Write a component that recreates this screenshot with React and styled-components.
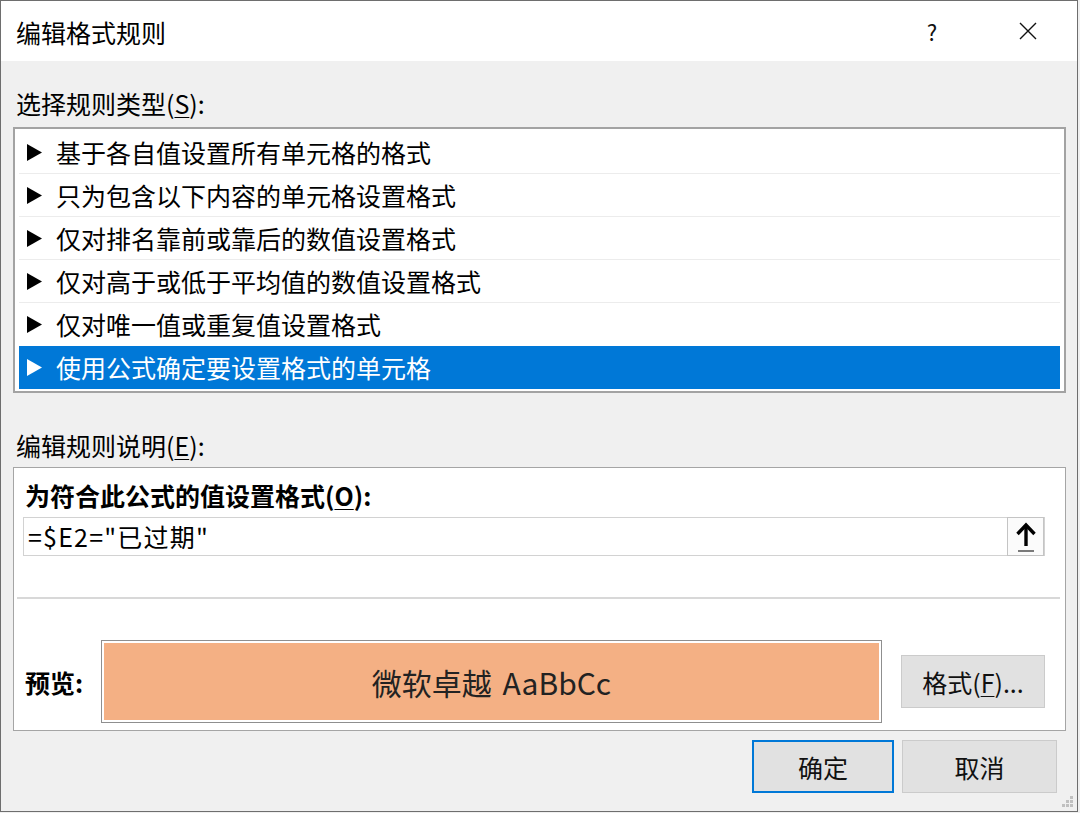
import React from "react";
import styled, { createGlobalStyle } from "styled-components";

const GlobalStyle = createGlobalStyle`
  html, body {
    margin: 0;
    padding: 0;
    background: #f0f0f0;
  }
  body {
    font-family: "Noto Sans CJK SC", "Noto Sans", sans-serif;
    color: #000;
  }
`;

const Window = styled.div`
  position: relative;
  width: 1078px;
  height: 812px;
  box-sizing: border-box;
  border: 1px solid #6e6e6e;
  background: #f0f0f0;
  display: flex;
  flex-direction: column;
`;

const TitleBar = styled.div`
  height: 60px;
  background: #fff;
  display: flex;
  align-items: center;
  padding-left: 15px;
`;

const Title = styled.div`
  flex: 1;
  font-size: 25px;
  line-height: 30px;
  margin-top: 2px;
`;

const TitleButton = styled.div`
  width: ${(p) => p.w}px;
  height: 60px;
  margin-right: ${(p) => p.mr || 0}px;
  display: flex;
  align-items: center;
  justify-content: center;
  font-size: 22px;
  color: #111;
`;

const Body = styled.div`
  flex: 1;
  display: flex;
  flex-direction: column;
  padding: 0 11px 0 12px;
`;

const SectionLabel = styled.div`
  font-size: 25px;
  line-height: 30px;
  padding-left: 3px;
  margin-top: ${(p) => p.mt}px;
  margin-bottom: ${(p) => p.mb}px;
`;

const Key = styled.span`
  text-decoration: underline;
  text-underline-offset: 3px;
  text-decoration-thickness: 1px;
`;

const RuleList = styled.div`
  border: 2px solid #a3a3a3;
  background: #fff;
  padding: 2px 4px;
  display: flex;
  flex-direction: column;
`;

const RuleRow = styled.div`
  height: 43px;
  box-sizing: border-box;
  display: flex;
  align-items: center;
  padding-left: 8px;
  font-size: 25px;
  color: ${(p) => (p.selected ? "#fff" : "#000")};
  background: ${(p) => (p.selected ? "#0078d7" : "transparent")};
  border-bottom: 1px solid ${(p) => (p.divider ? "#ececec" : "transparent")};
`;

const RuleText = styled.span`
  margin-left: 14px;
  line-height: 30px;
`;

const DescPanel = styled.div`
  background: #fff;
  border: 1px solid #a5a5a5;
  display: flex;
  flex-direction: column;
  padding: 12px 0 7px 0;
`;

const BoldLabel = styled.div`
  font-size: 25px;
  line-height: 30px;
  font-weight: 700;
  padding-left: 11px;
  width: ${(p) => (p.w ? `${p.w}px` : "auto")};
  box-sizing: border-box;
`;

const FormulaBox = styled.div`
  margin: 7px 20px 0 9px;
  height: 39px;
  box-sizing: border-box;
  border: 1px solid #d2d2d2;
  display: flex;
  align-items: stretch;
`;

const FormulaText = styled.div`
  flex: 1;
  font-size: 25px;
  line-height: 37px;
  padding-left: 4px;
  letter-spacing: 1.2px;
`;

const CollapseButton = styled.div`
  width: 37px;
  box-sizing: border-box;
  border: 1px solid #c4c4c4;
  margin: -1px 0;
  background: #fbfbfb;
  display: flex;
  align-items: center;
  justify-content: center;
`;

const Divider = styled.div`
  height: 2px;
  background: #d8d8d8;
  margin: 41px 5px 0 3px;
`;

const PreviewRow = styled.div`
  margin-top: 41px;
  display: flex;
  align-items: center;
`;

const PreviewBox = styled.div`
  width: 781px;
  height: 83px;
  box-sizing: border-box;
  border: 1px solid #8f8f8f;
  box-shadow: inset 0 0 0 2px #fff;
  background: #f4b084;
  display: flex;
  align-items: center;
  justify-content: center;
  font-size: 30px;
  color: #222;
  word-spacing: 4px;
`;

const Button = styled.div`
  width: ${(p) => p.w}px;
  height: 53px;
  box-sizing: border-box;
  background: #e1e1e1;
  border: ${(p) => (p.primary ? "2px solid #0078d7" : "1px solid #cbcbcb")};
  display: flex;
  align-items: center;
  justify-content: center;
  font-size: 25px;
  color: #111;
  margin-left: ${(p) => p.ml || 0}px;
`;

const Footer = styled.div`
  display: flex;
  justify-content: flex-end;
  margin-top: 9px;
  padding-right: 9px;
`;

const Grip = styled.svg`
  position: absolute;
  right: 3px;
  bottom: 3px;
`;

const rules = [
  "基于各自值设置所有单元格的格式",
  "只为包含以下内容的单元格设置格式",
  "仅对排名靠前或靠后的数值设置格式",
  "仅对高于或低于平均值的数值设置格式",
  "仅对唯一值或重复值设置格式",
  "使用公式确定要设置格式的单元格",
];

function Triangle({ color }) {
  return (
    <svg width="15" height="17" viewBox="0 0 15 17">
      <polygon points="0,0 15,8.5 0,17" fill={color} />
    </svg>
  );
}

export default function App() {
  const selected = 5;
  return (
    <>
      <GlobalStyle />
      <Window>
        <TitleBar>
          <Title>编辑格式规则</Title>
          <TitleButton w={48} mr={48}>?</TitleButton>
          <TitleButton w={48} mr={25}>
            <svg width="18" height="18" viewBox="0 0 18 18">
              <path d="M1 1 L17 17 M17 1 L1 17" stroke="#111" strokeWidth="1.4" />
            </svg>
          </TitleButton>
        </TitleBar>
        <Body>
          <SectionLabel mt={27} mb={9}>
            选择规则类型(<Key>S</Key>):
          </SectionLabel>
          <RuleList>
            {rules.map((r, i) => (
              <RuleRow
                key={r}
                selected={i === selected}
                divider={i < selected - 1}
              >
                <Triangle color={i === selected ? "#fff" : "#000"} />
                <RuleText>{r}</RuleText>
              </RuleRow>
            ))}
          </RuleList>
          <SectionLabel mt={37} mb={7}>
            编辑规则说明(<Key>E</Key>):
          </SectionLabel>
          <DescPanel>
            <BoldLabel>
              为符合此公式的值设置格式(<Key>O</Key>):
            </BoldLabel>
            <FormulaBox>
              <FormulaText>=$E2="已过期"</FormulaText>
              <CollapseButton>
                <svg width="22" height="32" viewBox="0 0 22 32">
                  <path d="M11 4 L11 25" stroke="#000" strokeWidth="3.4" />
                  <path d="M2.5 13 L11 4 L19.5 13" stroke="#000" strokeWidth="3.4" fill="none" />
                  <path d="M3 30 L19 30" stroke="#333" strokeWidth="1.3" />
                </svg>
              </CollapseButton>
            </FormulaBox>
            <Divider />
            <PreviewRow>
              <BoldLabel w={87}>预览:</BoldLabel>
              <PreviewBox>微软卓越 AaBbCc</PreviewBox>
              <Button w={144} ml={19}>
                格式(<Key>F</Key>)...
              </Button>
            </PreviewRow>
          </DescPanel>
          <Footer>
            <Button w={142} primary>
              确定
            </Button>
            <Button w={155} ml={8}>
              取消
            </Button>
          </Footer>
        </Body>
        <Grip width="12" height="12" viewBox="0 0 12 12">
          <rect x="8" y="0" width="3" height="3" fill="#c0c0c0" />
          <rect x="4" y="4" width="3" height="3" fill="#c0c0c0" />
          <rect x="8" y="4" width="3" height="3" fill="#c0c0c0" />
          <rect x="0" y="8" width="3" height="3" fill="#c0c0c0" />
          <rect x="4" y="8" width="3" height="3" fill="#c0c0c0" />
          <rect x="8" y="8" width="3" height="3" fill="#c0c0c0" />
        </Grip>
      </Window>
    </>
  );
}
